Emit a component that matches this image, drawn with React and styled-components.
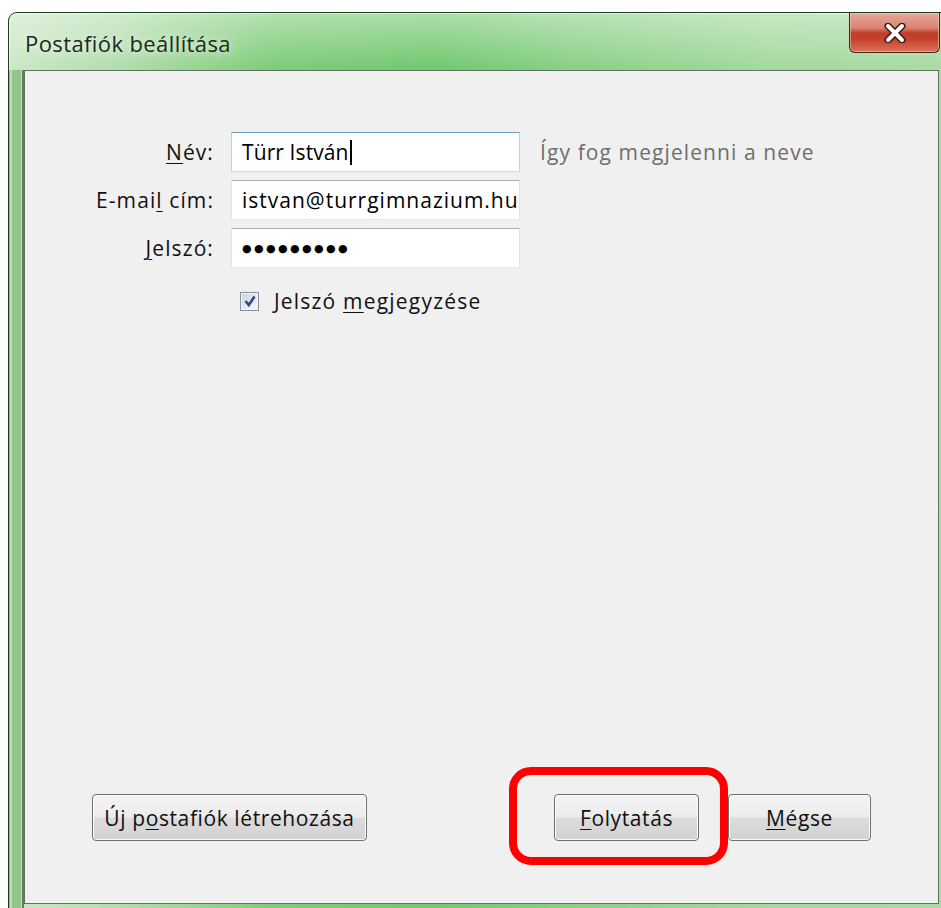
import React from 'react';
import styled, { createGlobalStyle, css } from 'styled-components';

const GlobalStyle = createGlobalStyle`
    html, body {
        margin: 0;
        padding: 0;
        background: #ffffff;
    }
    body {
        font-family: "Open Sans", "Noto Sans", "DejaVu Sans", sans-serif;
    }
`;

const Page = styled.div`
    box-sizing: border-box;
    height: 908px;
    overflow: hidden;
    padding: 12px 0 0 8px;
    width: 941px;
`;

// glass frame: striped side bars under the caption, tinted caption band
const Window = styled.div`
    background:
        linear-gradient(to right, #355535 0 1px, #b7dfb0 1px 3px, #93c48c 3px 12px, #bfe2b8 12px 13px, #5f7f5f 13px 15px) 0 57px / 15px 100% no-repeat,
        linear-gradient(to bottom, rgba(255, 255, 255, 0.4) 0px, rgba(255, 255, 255, 0) 55px),
        linear-gradient(to right, #cbe8c6 0%, #b2ddac 12%, #7fcc7a 28%, #73c870 45%, #8dd189 62%, #a3d99e 80%, #aadba5 100%);
    border: 1px solid #1d3b1d;
    border-bottom: none;
    border-radius: 9px 9px 0 0;
    box-shadow: inset 1px 1px 0 rgba(255, 255, 255, 0.55);
    display: flex;
    flex-direction: column;
    height: 910px;
    padding: 0 12px 0 15px;
    width: 916px;
`;

const TitleBar = styled.div`
    align-items: flex-start;
    display: flex;
    height: 57px;
`;

const Title = styled.div`
    color: #1b2a1b;
    font-size: 22px;
    letter-spacing: 0.4px;
    padding: 15px 0 0 1px;
    text-shadow: 0 0 8px rgba(255, 255, 255, 0.9);
`;

const CloseButton = styled.div`
    align-items: center;
    background: linear-gradient(to bottom, #e6a899 0%, #d98474 38%, #bf3c29 52%, #c6452f 70%, #da735b 100%);
    border: 1px solid #4c2018;
    border-top: none;
    border-radius: 0 0 6px 6px;
    box-shadow: inset 0 0 0 1px rgba(255, 220, 210, 0.5);
    box-sizing: border-box;
    display: flex;
    height: 40px;
    justify-content: center;
    margin-left: auto;
    width: 91px;
`;

const Client = styled.div`
    background: #f0f0f0;
    border: 1px solid #5f745f;
    box-sizing: border-box;
    display: flex;
    flex-direction: column;
    height: 834px;
    width: 915px;
`;

const Form = styled.div`
    align-items: center;
    display: grid;
    grid-template-columns: 189px 289px auto;
    column-gap: 17px;
    row-gap: 8px;
    margin-top: 61px;
`;

const underline = css`
    u {
        text-decoration-thickness: 1px;
        text-underline-offset: 3px;
    }
`;

const Label = styled.label`
    color: #111111;
    font-size: 21px;
    letter-spacing: 1.1px;
    text-align: right;
    ${underline}
`;

const TextBox = styled.div`
    align-items: center;
    background: #ffffff;
    border: 1px solid;
    border-color: #abadb3 #e2e3ea #e3e9ef #e2e3ea;
    box-sizing: border-box;
    color: #000000;
    display: flex;
    font-size: 21px;
    height: 40px;
    letter-spacing: ${props => props.spacing || 0.5}px;
    overflow: hidden;
    padding-left: 10px;
    white-space: nowrap;

    ${props => props.focused && css`
        border-color: #6f9bc4 #b9d2e8 #c7dcee #b9d2e8;
    `}
`;

const Caret = styled.span`
    background: #000000;
    display: inline-block;
    height: 25px;
    margin-left: 1px;
    width: 2px;
`;

const Dots = styled.span`
    font-family: "DejaVu Sans", sans-serif;
    font-size: 11px;
    letter-spacing: 2.4px;
`;

const Hint = styled.div`
    color: #6e6e6e;
    font-size: 21px;
    letter-spacing: 1.1px;
    padding-left: 3px;
`;

const CheckRow = styled.div`
    align-items: center;
    display: flex;
    gap: 15px;
    grid-column: 2 / 4;
    margin-top: 11px;
    padding-left: 9px;
`;

const CheckBox = styled.span`
    align-items: center;
    background: linear-gradient(135deg, #c9cedc 0%, #e6e9f1 55%, #f6f7fa 100%);
    border: 1px solid #8b8e99;
    box-shadow: inset 0 0 0 1px #f4f5f8;
    box-sizing: border-box;
    display: inline-flex;
    height: 19px;
    justify-content: center;
    width: 19px;
`;

const CheckLabel = styled.span`
    color: #111111;
    font-size: 21px;
    letter-spacing: 1.2px;
    ${underline}
`;

const ButtonBar = styled.div`
    align-items: center;
    display: flex;
    margin-bottom: 62px;
    margin-top: auto;
    padding: 0 67px;
`;

const ButtonGroup = styled.div`
    display: flex;
    gap: 29px;
    margin-left: auto;
`;

const Button = styled.div`
    align-items: center;
    background: linear-gradient(to bottom, #f4f4f4 0%, #ececec 48%, #dddddd 52%, #d1d1d1 100%);
    border: 1px solid #707070;
    border-radius: 4px;
    box-shadow: inset 0 0 0 1px #fbfbfb;
    box-sizing: border-box;
    color: #111111;
    display: flex;
    font-size: 21px;
    height: 47px;
    justify-content: center;
    letter-spacing: 0.6px;
    position: relative;
    width: ${props => props.width}px;
    ${underline}

    ${props => props.highlighted && css`
        &::after {
            border: 8px solid #ff0000;
            border-radius: 22px;
            bottom: -25px;
            content: '';
            left: -46px;
            pointer-events: none;
            position: absolute;
            right: -30px;
            top: -28px;
        }
    `}
`;

const CloseGlyph = () => (
    <svg width="22" height="20" viewBox="0 0 22 20">
        <path d="M4 3 L18 17 M18 3 L4 17" stroke="#3a1a14" strokeWidth="7" strokeLinecap="round" />
        <path d="M4 3 L18 17 M18 3 L4 17" stroke="#ffffff" strokeWidth="4" strokeLinecap="round" />
    </svg>
);

const CheckMark = () => (
    <svg width="14" height="14" viewBox="0 0 14 14">
        <path d="M2.5 7 L5.8 11 L11.5 2.5" fill="none" stroke="#34498a" strokeWidth="2.6" />
    </svg>
);

const App = () => (
    <Page>
        <GlobalStyle />
        <Window>
            <TitleBar>
                <Title>Postafiók beállítása</Title>
                <CloseButton>
                    <CloseGlyph />
                </CloseButton>
            </TitleBar>
            <Client>
                <Form>
                    <Label><u>N</u>év:</Label>
                    <TextBox focused spacing={0.1}>
                        Türr István<Caret />
                    </TextBox>
                    <Hint>Így fog megjelenni a neve</Hint>

                    <Label>E-mai<u>l</u> cím:</Label>
                    <TextBox spacing={1}>istvan@turrgimnazium.hu</TextBox>
                    <span />

                    <Label><u>J</u>elszó:</Label>
                    <TextBox>
                        <Dots>●●●●●●●●●</Dots>
                    </TextBox>
                    <span />

                    <CheckRow>
                        <CheckBox>
                            <CheckMark />
                        </CheckBox>
                        <CheckLabel>Jelszó <u>m</u>egjegyzése</CheckLabel>
                    </CheckRow>
                </Form>
                <ButtonBar>
                    <Button width={275}>Új p<u>o</u>stafiók létrehozása</Button>
                    <ButtonGroup>
                        <Button width={145} highlighted><u>F</u>olytatás</Button>
                        <Button width={143}><u>M</u>égse</Button>
                    </ButtonGroup>
                </ButtonBar>
            </Client>
        </Window>
    </Page>
);

export default App;
